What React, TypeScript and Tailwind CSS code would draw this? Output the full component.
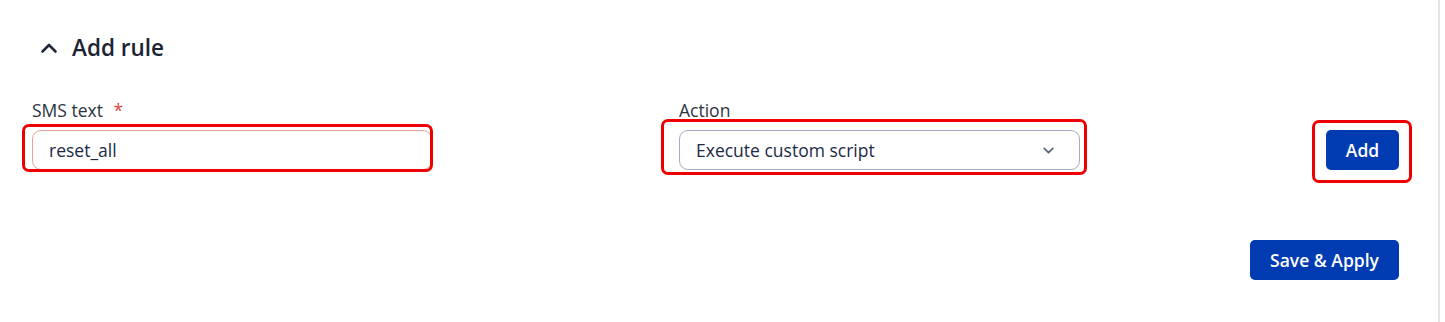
import { ChevronDown } from "lucide-react";

function Annotation({ className }: { className: string }) {
  return <div className={`pointer-events-none absolute rounded-[7px] border-[3px] border-[#ee0000] ${className}`} />;
}

export default function App() {
  return (
    <div className="flex min-h-[322px] w-full bg-white font-['Open_Sans',sans-serif]">
      <div className="w-[1440px] shrink-0 border-r-2 border-[#e4e4e7] pl-8 pr-[39px] pt-[34px]">
        <div className="flex h-7 items-center">
          <svg width="24" height="24" viewBox="0 0 24 24" className="ml-[5px]" fill="none">
            <path d="M5.5 15.5 12 9l6.5 6.5" stroke="#1f2937" strokeWidth="2.6" strokeLinecap="round" strokeLinejoin="round" />
          </svg>
          <h2 className="ml-[11px] text-[22.5px] font-semibold leading-7 text-[#1c2434]">Add rule</h2>
        </div>

        <div className="relative mt-9 flex items-start">
          <div className="w-[647px] shrink-0">
            <label className="block text-[17.5px] leading-6 text-[#2b3340]">
              SMS text <span className="ml-1.5 text-[#d9473c]">*</span>
            </label>
            <input
              defaultValue="reset_all"
              className="mt-2 block h-10 w-[400px] rounded-[9px] border border-[#e6a39a] bg-white px-4 text-[17.5px] text-[#1c2a45] outline-none"
            />
          </div>

          <div className="w-[647px] shrink-0">
            <label className="block text-[17.5px] leading-6 text-[#2b3340]">Action</label>
            <div className="mt-2 flex h-10 w-[401px] items-center justify-between rounded-[9px] border border-[#a4adbf] bg-white pl-4 pr-[22px]">
              <span className="text-[17.5px] text-[#1c2a45]">Execute custom script</span>
              <ChevronDown size={17} strokeWidth={2.4} className="text-[#5b6475]" />
            </div>
          </div>

          <div className="pt-8">
            <button
              type="button"
              className="flex h-10 w-[73px] items-center justify-center rounded-[5px] bg-[#003bb2] text-[17.5px] font-semibold text-white"
            >
              Add
            </button>
          </div>

          <Annotation className="left-[-10px] top-[26px] h-[48px] w-[411px]" />
          <Annotation className="left-[629px] top-[21px] h-[56px] w-[426px]" />
          <Annotation className="left-[1280px] top-[22px] h-[63px] w-[100px]" />
        </div>

        <div className="mt-[70px] flex justify-end">
          <button
            type="button"
            className="flex h-10 w-[149px] items-center justify-center rounded-[5px] bg-[#003bb2] text-[17.5px] font-semibold text-white"
          >
            Save &amp; Apply
          </button>
        </div>
      </div>
    </div>
  );
}
